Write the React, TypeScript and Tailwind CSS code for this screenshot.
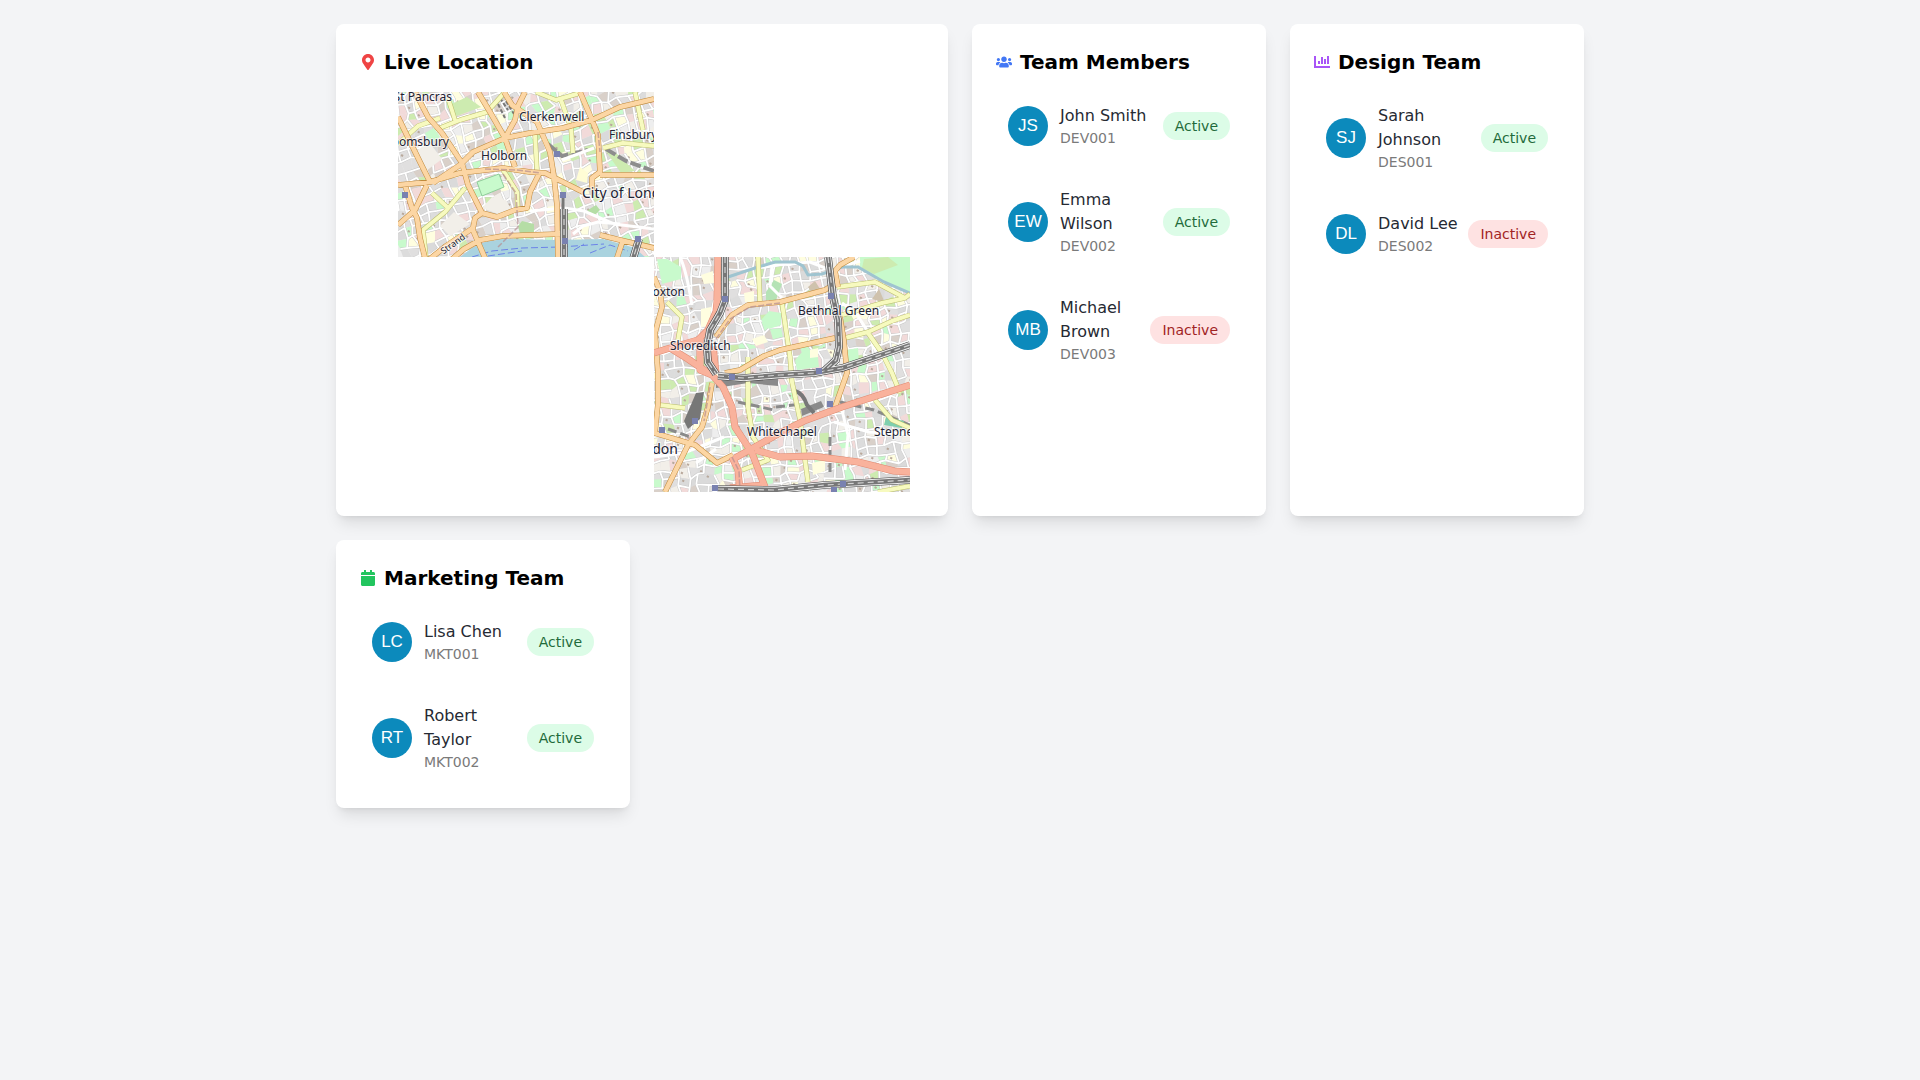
import type { ReactNode } from 'react'
import { FaCalendar, FaMapMarkerAlt, FaUsers } from 'react-icons/fa'

type Member = { initials: string; name: string; id: string; active: boolean }
type Line = [number, number][]

const developers: Member[] = [
  { initials: 'JS', name: 'John Smith', id: 'DEV001', active: true },
  { initials: 'EW', name: 'Emma Wilson', id: 'DEV002', active: true },
  { initials: 'MB', name: 'Michael Brown', id: 'DEV003', active: false },
]

const designers: Member[] = [
  { initials: 'SJ', name: 'Sarah Johnson', id: 'DES001', active: true },
  { initials: 'DL', name: 'David Lee', id: 'DES002', active: false },
]

const marketers: Member[] = [
  { initials: 'LC', name: 'Lisa Chen', id: 'MKT001', active: true },
  { initials: 'RT', name: 'Robert Taylor', id: 'MKT002', active: true },
]

// City of London tile
const west = {
  primary: [
    [[17, 0], [30, 25], [44, 41], [64, 71], [70, 93], [84, 121], [99, 125], [117, 118], [129, 116], [132, 100], [142, 80]],
    [[80, 0], [92, 20], [107, 46], [117, 75]],
    [[0, 25], [22, 70], [32, 90]],
    [[0, 93], [32, 90], [62, 81], [105, 76], [132, 80], [147, 81], [185, 100]],
    [[35, 91], [62, 73], [75, 60], [107, 46], [132, 41], [165, 36], [194, 28], [222, 15], [256, 7]],
    [[182, 0], [194, 28], [200, 43], [202, 80], [194, 86], [194, 98]],
    [[202, 83], [256, 83]],
    [[106, 0], [114, 13], [139, 30], [152, 60], [156, 85], [159, 113], [160, 165]],
    [[127, 0], [120, 14], [117, 28], [107, 46]],
    [[28, 170], [48, 154], [75, 136], [77, 126], [84, 121]],
    [[53, 168], [66, 157], [82, 148], [105, 144], [132, 143], [162, 142]],
    [[202, 143], [222, 148], [256, 156]],
    [[74, 136], [87, 166]],
    [[225, 148], [219, 166]],
    [[7, 93], [14, 116], [19, 126], [22, 146], [27, 166]],
    [[0, 133], [17, 118], [29, 93]],
  ] as Line[],
  secondary: [
    [[42, 36], [62, 28], [89, 20], [107, 0]],
    [[50, 6], [57, 28]],
    [[137, 43], [139, 78]],
    [[138, 0], [158, 8], [182, 1]],
    [[163, 8], [173, 36], [175, 61]],
    [[237, 0], [245, 38]],
    [[205, 56], [225, 51], [256, 54]],
    [[34, 101], [49, 115]],
    [[67, 96], [47, 120], [25, 138], [28, 165]],
    [[105, 78], [119, 100], [120, 120]],
    [[0, 52], [20, 34], [42, 26]],
  ] as Line[],
  stations: [[159, 62], [165, 103], [167, 149], [240, 147], [7, 103]],
}

// Whitechapel tile
const east = {
  trunk: [
    [[64, 0], [63, 45], [62, 55], [54, 73], [44, 83], [16, 91], [0, 96]],
    [[16, 91], [34, 102], [56, 117]],
    [[46, 80], [46, 113], [58, 118], [69, 130], [78, 150], [81, 170], [98, 196], [111, 230]],
    [[59, 90], [62, 116]],
    [[81, 201], [126, 176], [150, 164], [188, 150], [256, 128]],
    [[101, 193], [126, 200], [158, 199], [204, 205], [240, 214], [256, 215]],
    [[78, 200], [84, 213], [86, 235]],
    [[76, 231], [111, 228]],
  ] as Line[],
  primary: [
    [[0, 20], [6, 34], [8, 50], [1, 76], [4, 116], [4, 146], [1, 176]],
    [[62, 80], [72, 66], [78, 58], [94, 48], [126, 45], [171, 33], [183, 25]],
    [[200, 0], [186, 8], [181, 14], [184, 30]],
    [[71, 116], [86, 113], [110, 99], [126, 93], [181, 81]],
    [[186, 60], [190, 84], [193, 116], [181, 150]],
    [[58, 126], [54, 150], [48, 170], [34, 188], [11, 235]],
    [[0, 176], [41, 188], [63, 206], [79, 198]],
  ] as Line[],
  secondary: [
    [[104, 0], [106, 45]],
    [[13, 45], [28, 60], [24, 83]],
    [[183, 30], [221, 25], [251, 41], [256, 37]],
    [[188, 58], [228, 46], [251, 41]],
    [[191, 81], [214, 75], [238, 64], [256, 58]],
    [[214, 76], [228, 96], [238, 116], [246, 136]],
    [[128, 46], [136, 100], [138, 125], [146, 163], [151, 203], [154, 225]],
    [[94, 100], [94, 150], [99, 180], [114, 203], [88, 213]],
    [[221, 143], [238, 163], [256, 171]],
    [[224, 235], [256, 229]],
    [[6, 148], [31, 151]],
  ] as Line[],
  rails: [
    [[71, 0], [71, 43], [66, 56], [56, 73], [53, 90], [54, 105], [62, 117]],
    [[174, 0], [179, 40], [184, 63], [185, 90], [182, 103], [170, 114]],
    [[64, 119], [90, 121], [126, 118], [160, 116], [188, 111], [221, 100], [256, 88]],
    [[64, 232], [121, 233], [171, 228], [256, 223]],
  ] as Line[],
  stations: [[71, 42], [177, 39], [165, 114], [78, 120], [41, 164], [8, 173], [61, 231], [176, 147], [189, 227], [180, 233]],
}

const toPath = (line: Line) => 'M' + line.map((p) => p.join(' ')).join('L')

// repeatable random numbers so the street mesh never changes between renders
function random(seed: number) {
  let s = seed
  return () => {
    s = (s * 16807) % 2147483647
    return s / 2147483647
  }
}

const blockColors = ['#dcdcdc', '#e0dfdf', '#d9d0c9', '#eeeeee', '#f2dad9', '#f2dad9', '#f2efe9', '#fffee0', '#cdebb0', '#c8facc', '#e0dfdf', '#dadada']

function streetMesh(seed: number, tilt: number) {
  const rand = random(seed)
  const step = 9
  const size = 36
  const points: Line = []
  for (let r = 0; r < size; r++) {
    for (let c = 0; c < size; c++) {
      const x = (c - 4) * step + rand() * 5
      const y = (r - 9) * step + rand() * 5
      points.push([Math.round((x + y * tilt) * 10) / 10, Math.round((y - x * tilt + 30) * 10) / 10])
    }
  }
  const blocks: { d: string; fill: string }[] = []
  let streets = ''
  let details = ''
  for (let r = 0; r < size - 1; r++) {
    for (let c = 0; c < size - 1; c++) {
      const a = points[r * size + c]
      const b = points[r * size + c + 1]
      const d = points[(r + 1) * size + c]
      const e = points[(r + 1) * size + c + 1]
      blocks.push({ d: toPath([a, b, e, d]) + 'Z', fill: blockColors[Math.floor(rand() * blockColors.length)] })
      if (rand() > 0.25) streets += toPath([a, b])
      if (rand() > 0.25) streets += toPath([a, d])
      if (rand() > 0.8) details += toPath([[a[0] + 3, a[1] + 3], [a[0] + 5, a[1] + 4]])
    }
  }
  return { blocks, streets, details }
}

const westMesh = streetMesh(41, 0.3)
const eastMesh = streetMesh(97, 0.12)

function Streets({ mesh }: { mesh: typeof westMesh }) {
  return (
    <>
      {mesh.blocks.map((block, idx) => (
        <path key={idx} d={block.d} fill={block.fill} />
      ))}
      <path d={mesh.details} stroke="#b9a99c" strokeWidth="2" fill="none" />
      <path d={mesh.streets} stroke="#c4c4c4" strokeWidth="2.6" fill="none" />
      <path d={mesh.streets} stroke="#ffffff" strokeWidth="1.8" fill="none" />
    </>
  )
}

function Roads({ lines, color, casing, width }: { lines: Line[]; color: string; casing: string; width: number }) {
  const d = lines.map(toPath).join('')
  return (
    <g fill="none" strokeLinejoin="round">
      <path d={d} stroke={casing} strokeWidth={width + 1} />
      <path d={d} stroke={color} strokeWidth={width} />
    </g>
  )
}

function Rails({ d }: { d: string }) {
  return (
    <g fill="none">
      <path d={d} stroke="#444444" strokeWidth="7.6" />
      <path d={d} stroke="#eeeeee" strokeWidth="6.4" />
      <path d={d} stroke="#777777" strokeWidth="4.4" />
      <path d={d} stroke="#d4d4d4" strokeWidth="1.2" strokeDasharray="6 4" />
    </g>
  )
}

function Stations({ at }: { at: number[][] }) {
  return (
    <>
      {at.map(([x, y]) => (
        <rect key={`${x}-${y}`} x={x - 3} y={y - 3} width="6" height="6" fill="#7981b0" />
      ))}
    </>
  )
}

function WestTile() {
  return (
    <svg x="38" y="0" width="256" height="165">
      <rect width="256" height="165" fill="#eeeeee" />
      <Streets mesh={westMesh} />
      <g fill="#c8facc">
        <path d="M79 90l22-8 5 13-22 9z" stroke="#8fce9a" />
        <path d="M27 41l9-5 6 9-10 6z" />
        <path d="M49 14l20-9 14 10-24 9z" fill="#cdebb0" />
        <path d="M97 50l8-2 3 10-7 3z" />
        <path d="M120 134l4-5 12 3v9l-14 1z" fill="#b5dda5" />
        <path d="M207 58l12 4 18 17-14 2z" fill="#cdebb0" />
        <path d="M190 118l8-5 4 5-4 4h-10z" fill="#b5dda5" />
      </g>
      <g fill="#f2efe9">
        <path d="M17 60l14-10 13 17-16 12z" />
        <path d="M42 134l14-14 16 12-20 12z" />
        <path d="M84 116l10-11 14 3 5 9-13 5z" />
      </g>
      <path d="M178 88l4-13 8 6-1 10z" fill="#fffdd5" />
      <path d="M100 12l7 14M108 9l8 13M102 6l8 12" stroke="#777777" strokeWidth="2" strokeDasharray="4 2" />
      <path d="M208 57l20 12 28 10M150 52l14 12 26-6" stroke="#8d8d8d" strokeWidth="4" fill="none" strokeDasharray="11 3" />
      <path d="M164 68l32-12M132 119l34-3 20 3 30 13 40 5M175 142l10-8 15-4 22 2" stroke="#ffffff" strokeWidth="3" fill="none" />
      <path d="M62 165l12-9 13-6 18-3 54 1 46-1 32 9 10 9z" fill="#aad3df" />
      <path d="M74 165l20-6 30-3 38-1 44-3M90 164l34-5M176 158l10-6M192 161l20-8 18 6" stroke="#6c83e8" fill="none" strokeDasharray="7 3" />
      <Roads lines={west.secondary} color="#f7fabf" casing="#b9bd6c" width={4} />
      <Roads lines={west.primary} color="#fcd6a4" casing="#c08a3c" width={4.6} />
      <path d="M87 77l32 1 24 3M105 82l13 19 2 34-20 20M200 40l2 20" stroke="#b58d90" strokeOpacity="0.7" fill="none" strokeWidth="1.5" strokeDasharray="6 2" />
      <path d="M165 103v17" stroke="#777777" strokeWidth="3" />
      <Rails d="M166 117v50M241 147l-6 20" />
      <Stations at={west.stations} />
      <g className="font-['Noto_Sans',sans-serif] text-[12px]" fill="#222233" stroke="#ffffff" strokeOpacity="0.6" strokeWidth="2" paintOrder="stroke">
        <text x="54" y="9" textAnchor="end">St Pancras</text>
        <text x="121" y="29">Clerkenwell</text>
        <text x="51" y="54" textAnchor="end">Bloomsbury</text>
        <text x="83" y="68">Holborn</text>
        <text x="211" y="47">Finsbury</text>
        <text x="184" y="106" className="text-[14px]">City of London</text>
        <text x="55" y="155" textAnchor="middle" transform="rotate(-36 55 152)" className="text-[9px]">Strand</text>
      </g>
    </svg>
  )
}

function EastTile() {
  return (
    <svg x="294" y="165" width="256" height="235">
      <rect width="256" height="235" fill="#e0dfdf" />
      <Streets mesh={eastMesh} />
      <path d="M206 0h50v35l-28-10-22-13z" fill="#c8facc" />
      <path d="M210 2l24-2 10 8-24 9-12-6z" fill="#cdebb0" />
      <g fill="#c8facc">
        <path d="M3 2h10l14 8v12L8 27z" />
        <path d="M112 35l8-12 8 4-6 16h-10z" fill="#b5e3b5" />
        <path d="M141 103l8-9 14-2 2 18-22 3z" />
        <path d="M192 93l12-2 1 16-12 2z" />
        <path d="M107 63l8-9 12 2v12l-12 4z" />
      </g>
      <g fill="#fffee0">
        <path d="M47 18l12-4 1 12-10 1zM47 52l10-2-1 19-9 1zM98 82l12-4 4 7-12 4zM158 206l13-3v11l-12 4zM156 93l8-2v9l-8 1zM90 36l10-2v11h-9z" />
      </g>
      <path d="M154 30l7-6 5 8-7 6zM218 42l7-10 6 14z" fill="#cfc2ad" />
      <path d="M38 48q-6-36-12-48M112 9l44-4 20 8 30-9" stroke="#ffffff" strokeWidth="3" fill="none" />
      <path d="M74 20l30-10 17-5 20 0 8 4 5 9 14-1 20-7h16l26 15 28 12" stroke="#9fc4d0" strokeWidth="3" fill="none" />
      <path d="M118 9l-2 20 12 12M188 46l14 10 12 19 8 20M0 200l30-4 40-16M42 206l20-14M180 165l35 10 41 2M188 153l6 25-3 35" stroke="#ffffff" strokeWidth="3" fill="none" />
      <g fill="#8a8a8a">
        <path d="M42 136l8-1-4 27-12 10-4-8z" fill="#777777" />
        <path d="M62 120l62 2v7l-30-3-32 5z" />
        <path d="M147 152l20-8 3 6-22 9z" />
      </g>
      <path d="M122 150l26-3M186 145l34 8 36 15M176 180v38M84 145l36 8M14 172l28 10" stroke="#8a8a8a" strokeWidth="3" fill="none" strokeDasharray="9 4" />
      <path d="M141 134q8 2 12 14l7 8" stroke="#777777" strokeWidth="4" fill="none" />
      <path d="M232 160l18 4-2 7-18-3z" fill="#7fcfae" />
      <Roads lines={east.secondary} color="#f7fabf" casing="#b9bd6c" width={4} />
      <Roads lines={east.primary} color="#fcd6a4" casing="#c08a3c" width={4.5} />
      <Roads lines={east.trunk} color="#f9b29c" casing="#e08a72" width={6} />
      <path d="M62 82l14-20 20-12 30-4M78 200l7 14 1 20M56 130l-6 34" stroke="#b58d90" strokeOpacity="0.7" fill="none" strokeWidth="1.5" strokeDasharray="6 2" />
      <Rails d={east.rails.map(toPath).join('')} />
      <Stations at={east.stations} />
      <g className="font-['Noto_Sans',sans-serif] text-[12px]" fill="#222233" stroke="#ffffff" strokeOpacity="0.6" strokeWidth="2" paintOrder="stroke">
        <text x="31" y="39" textAnchor="end">Hoxton</text>
        <text x="144" y="58">Bethnal Green</text>
        <text x="16" y="93">Shoreditch</text>
        <text x="93" y="179">Whitechapel</text>
        <text x="220" y="179">Stepney</text>
        <text x="24" y="197" textAnchor="end" className="text-[14px]">London</text>
      </g>
    </svg>
  )
}

function ChartIcon() {
  return (
    <svg className="size-4 fill-[#a855f7]" viewBox="0 0 16 16">
      <path d="M0 2h2v10h14v2H0zM4 7h2v3H4zM7 3h2v7H7zM10 5h2v5h-2zM13 2h2v8h-2z" />
    </svg>
  )
}

function Card({ icon, title, wide, children }: { icon: ReactNode; title: string; wide?: boolean; children: ReactNode }) {
  return (
    <section className={`rounded-lg bg-white p-6 shadow-lg ${wide ? 'md:col-span-2' : ''}`}>
      <h2 className="mb-4 flex items-center gap-2 text-xl font-bold text-black">
        {icon}
        {title}
      </h2>
      {children}
    </section>
  )
}

function MemberList({ members }: { members: Member[] }) {
  return (
    <ul className="space-y-4">
      {members.map((member) => (
        <li key={member.id} className="flex items-center justify-between p-3">
          <div className="flex items-center gap-3">
            <div className="flex size-10 shrink-0 items-center justify-center rounded-full bg-[#0c8abc] font-['Liberation_Sans',sans-serif] text-[17px] text-white">
              {member.initials}
            </div>
            <div>
              <h3 className="text-base text-[#262a33]">{member.name}</h3>
              <p className="text-sm text-[#7a7a7a]">{member.id}</p>
            </div>
          </div>
          <span className={`rounded-full px-3 py-1 text-sm ${member.active ? 'bg-[#dcfce7] text-[#1f6b3b]' : 'bg-[#fee2e2] text-[#a12424]'}`}>
            {member.active ? 'Active' : 'Inactive'}
          </span>
        </li>
      ))}
    </ul>
  )
}

export default function App() {
  return (
    <div className="min-h-screen bg-gray-100 py-6 font-['DejaVu_Sans',sans-serif]">
      <main className="mx-auto grid max-w-7xl grid-cols-1 gap-6 px-4 md:grid-cols-2 lg:grid-cols-4">
        <Card wide title="Live Location" icon={<FaMapMarkerAlt className="size-4 text-[#ef4444]" />}>
          <svg className="h-[400px] w-full" viewBox="0 0 564 400" role="img" aria-label="Map of London">
            <WestTile />
            <EastTile />
          </svg>
        </Card>
        <Card title="Team Members" icon={<FaUsers className="size-4 text-[#4277f5]" />}>
          <MemberList members={developers} />
        </Card>
        <Card title="Design Team" icon={<ChartIcon />}>
          <MemberList members={designers} />
        </Card>
        <Card title="Marketing Team" icon={<FaCalendar className="size-4 text-[#22c55e]" />}>
          <MemberList members={marketers} />
        </Card>
      </main>
    </div>
  )
}
